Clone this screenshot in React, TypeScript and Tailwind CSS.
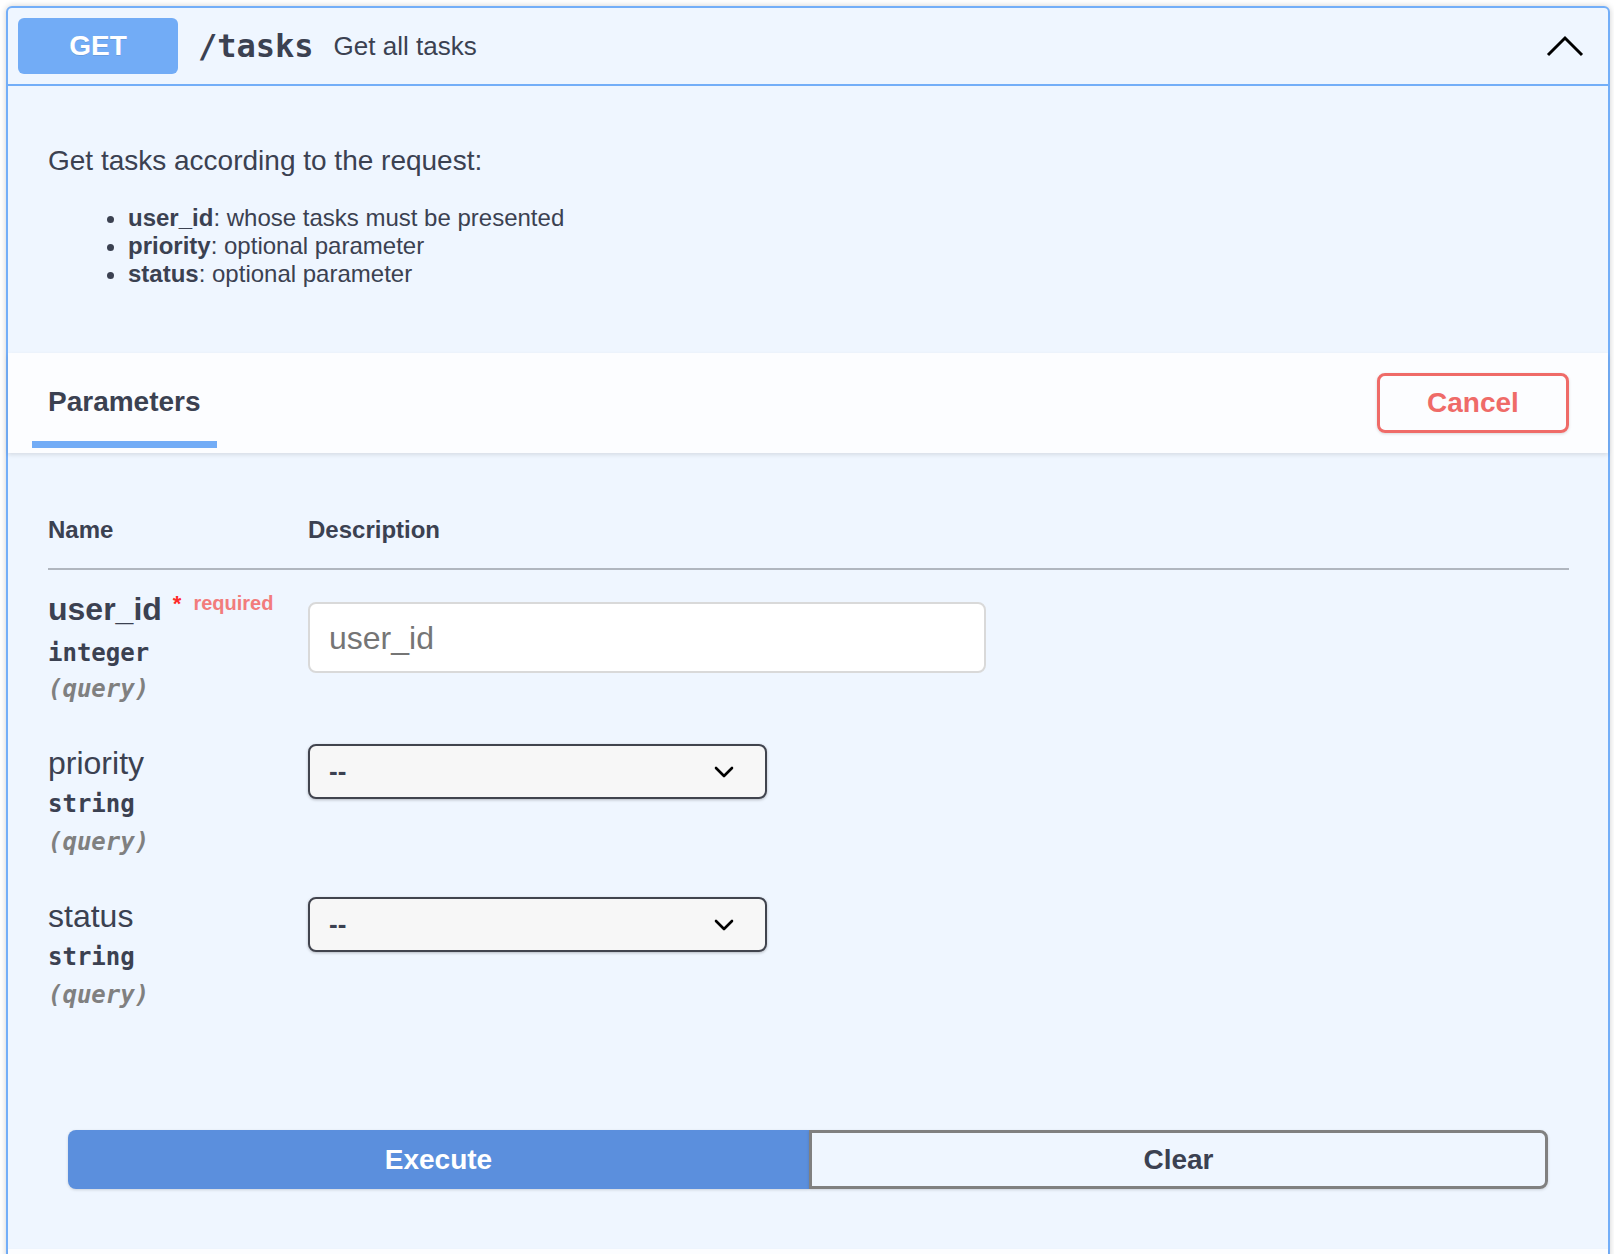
import type { ReactNode } from 'react';

const SANS = { fontFamily: '"Liberation Sans", Arial, sans-serif' };
const MONO = { fontFamily: '"DejaVu Sans Mono", "Liberation Mono", monospace' };

function ChevronDown() {
  return (
    <svg width="20" height="12" viewBox="0 0 20 12" fill="none" className="shrink-0">
      <path d="M2 2 L10 10 L18 2" stroke="#000" strokeWidth="2.6" strokeLinecap="round" strokeLinejoin="round" />
    </svg>
  );
}

function Select() {
  return (
    <div className="flex h-[55px] w-[459px] items-center justify-between rounded-[8px] border-2 border-[#41444e] bg-[#f7f7f7] pl-[19px] pr-[31px] shadow-[0_1px_3px_rgba(0,0,0,0.25)]">
      <span className="text-[26px] font-bold text-[#3b4151]">--</span>
      <ChevronDown />
    </div>
  );
}

function ParamRow({
  name,
  type,
  required,
  children,
}: {
  name: string;
  type: string;
  required?: boolean;
  children: ReactNode;
}) {
  return (
    <div className="flex">
      <div className="w-[260px] shrink-0">
        {required ? (
          <div className="flex items-start leading-[38px]">
            <span className="text-[32px] font-bold text-[#3b4151]">{name}</span>
            <span className="ml-[11px] mt-[-1px] text-[22px] font-bold leading-[30px] text-[#ff2a2a]">*</span>
            <span className="ml-[12px] mt-[-2px] text-[20px] font-bold leading-[30px] text-[#f27c7c]">required</span>
          </div>
        ) : (
          <div className="text-[32px] leading-[38px] text-[#3b4151]">{name}</div>
        )}
        <div
          style={MONO}
          className={`${required ? 'mt-[10px]' : 'mt-[7px]'} text-[24px] font-bold leading-[30px] text-[#3b4151]`}
        >
          {type}
        </div>
        <div
          style={MONO}
          className={`${required ? 'mt-[6px]' : 'mt-[8px]'} text-[24px] font-bold italic leading-[30px] text-[#808080]`}
        >
          (query)
        </div>
      </div>
      <div className={required ? 'pt-[12px]' : ''}>{children}</div>
    </div>
  );
}

export default function App() {
  return (
    <div style={SANS} className="h-[1254px] overflow-hidden bg-white pl-[6px] pr-[4px] pt-[6px]">
      <div className="rounded-[6px] border-2 border-[#73aef8] bg-[#eff6ff] shadow-[0_0_6px_rgba(0,0,0,0.19)]">
        {/* Summary */}
        <div className="flex h-[78px] items-center border-b-2 border-[#73aef8] pl-[10px] pr-[24px]">
          <div className="flex h-[56px] w-[160px] items-center justify-center rounded-[6px] bg-[#72acf6] text-[28px] font-bold text-white [text-shadow:0_1px_0_rgba(0,0,0,0.1)]">
            GET
          </div>
          <span style={MONO} className="ml-[20px] text-[32px] font-bold text-[#3b4151]">
            /tasks
          </span>
          <span className="ml-[20px] text-[26px] text-[#3b4151]">Get all tasks</span>
          <div className="flex-1" />
          <svg width="38" height="22" viewBox="0 0 38 22" fill="none">
            <path d="M2 20 L19 3 L36 20" stroke="#000" strokeWidth="3" />
          </svg>
        </div>

        {/* Description */}
        <div className="px-[40px] pb-[65px] pt-[57px] text-[#3b4151]">
          <p className="text-[28px] leading-[36px]">Get tasks according to the request:</p>
          <ul className="mt-[25px] list-disc pl-[80px] text-[24px] leading-[28px]">
            <li>
              <b>user_id</b>: whose tasks must be presented
            </li>
            <li>
              <b>priority</b>: optional parameter
            </li>
            <li>
              <b>status</b>: optional parameter
            </li>
          </ul>
        </div>

        {/* Parameters header */}
        <div className="flex h-[100px] items-center justify-between bg-[#fcfdff] pl-[24px] pr-[39px] shadow-[0_2px_4px_rgba(0,0,0,0.1)]">
          <div className="flex h-full flex-col px-[16px] pt-[32px]">
            <span className="text-[28px] font-bold leading-[34px] text-[#3b4151]">Parameters</span>
            <div className="mx-[-16px] mt-[22px] h-[7px] bg-[#72acf6]" />
          </div>
          <button className="h-[60px] w-[192px] rounded-[8px] border-[3px] border-[#ef6b68] bg-transparent text-[28px] font-bold text-[#ef6b68] shadow-[0_1px_3px_rgba(0,0,0,0.15)]">
            Cancel
          </button>
        </div>

        {/* Table */}
        <div className="pl-[40px] pr-[39px] pt-[62px]">
          <div className="flex border-b-2 border-[#b0b6bf] pb-[23px] text-[24px] font-bold leading-[30px] text-[#3b4151]">
            <div className="w-[260px]">Name</div>
            <div>Description</div>
          </div>
          <div className="flex flex-col gap-[40px] pt-[20px]">
            <ParamRow name="user_id" type="integer" required>
              <div className="flex h-[71px] w-[678px] items-center rounded-[8px] border-2 border-[#d9d9d9] bg-white pl-[19px] text-[32px] text-[#757575]">
                user_id
              </div>
            </ParamRow>
            <ParamRow name="priority" type="string">
              <Select />
            </ParamRow>
            <ParamRow name="status" type="string">
              <Select />
            </ParamRow>
          </div>
        </div>

        {/* Execute / Clear */}
        <div className="flex px-[60px] pb-[60px] pt-[120px]">
          <button className="h-[59px] w-[741px] shrink-0 rounded-l-[8px] bg-[#5b8fdd] text-[28px] font-bold text-white shadow-[0_1px_3px_rgba(0,0,0,0.15)]">
            Execute
          </button>
          <button className="h-[59px] flex-1 rounded-r-[8px] border-[3px] border-[#808080] bg-transparent text-[28px] font-bold text-[#3b4151] shadow-[0_1px_3px_rgba(0,0,0,0.15)]">
            Clear
          </button>
        </div>

        {/* Responses header (cut off) */}
        <div className="h-[100px] bg-[#fcfdff] shadow-[0_1px_2px_rgba(0,0,0,0.1)]" />
      </div>
    </div>
  );
}
